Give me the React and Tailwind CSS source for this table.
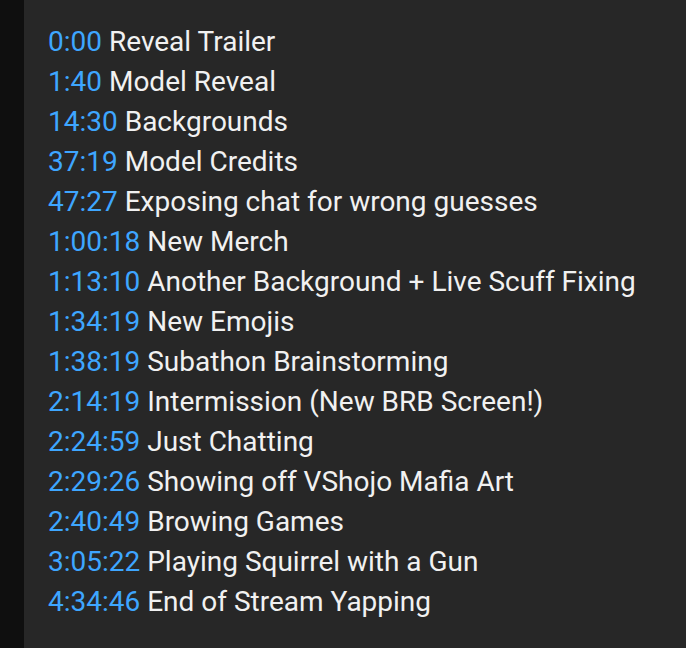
const items = [
  ["0:00", "Reveal Trailer"],
  ["1:40", "Model Reveal"],
  ["14:30", "Backgrounds"],
  ["37:19", "Model Credits"],
  ["47:27", "Exposing chat for wrong guesses"],
  ["1:00:18", "New Merch"],
  ["1:13:10", "Another Background + Live Scuff Fixing"],
  ["1:34:19", "New Emojis"],
  ["1:38:19", "Subathon Brainstorming"],
  ["2:14:19", "Intermission (New BRB Screen!)"],
  ["2:24:59", "Just Chatting"],
  ["2:29:26", "Showing off VShojo Mafia Art"],
  ["2:40:49", "Browing Games"],
  ["3:05:22", "Playing Squirrel with a Gun"],
  ["4:34:46", "End of Stream Yapping"],
];

export default function App() {
  return (
    <div className="flex h-[648px] w-[686px] bg-[#0f0f0f]" style={{ fontFamily: "Roboto, sans-serif" }}>
      <div className="w-[24px] shrink-0" />
      <div className="flex-1 bg-[#272727] pl-[24px] pt-[22px]">
        {items.map(([t, label]) => (
          <div key={t} className="h-[40px] text-[28px] leading-[40px] text-[#f1f1f1] whitespace-nowrap">
            <span className="text-[#3ea6ff]">{t}</span> {label}
          </div>
        ))}
      </div>
    </div>
  );
}
